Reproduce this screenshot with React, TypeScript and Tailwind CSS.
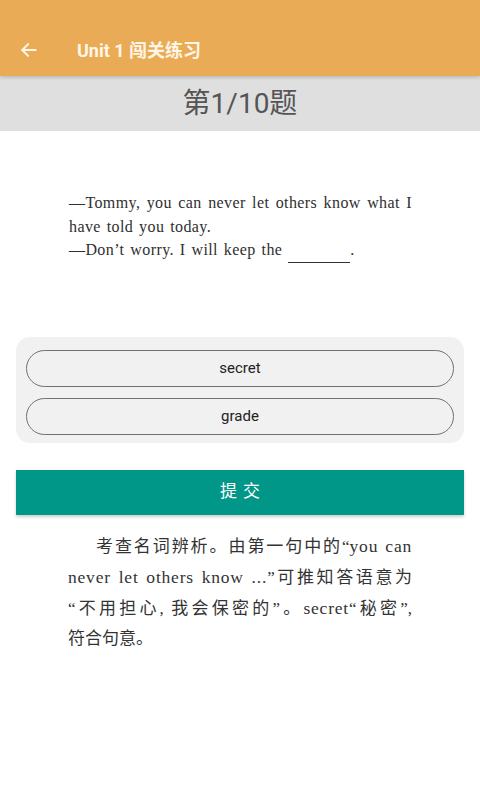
import React from 'react';

const serif = "font-['Liberation_Serif','Noto_Sans_CJK_SC',serif]";

export default function App() {
  const options = ['secret', 'grade'];

  return (
    <div className="w-[480px] h-[800px] bg-white overflow-hidden font-['Roboto','Noto_Sans_CJK_SC',sans-serif]">
      {/* Toolbar */}
      <header className="h-[76px] bg-[#EAAB57] pt-6 flex items-center shadow-[0_2px_3px_rgba(0,0,0,0.15)] relative z-10">
        <button className="w-[58px] flex items-center pl-[19px] text-[#FFF6E6]">
          <svg width="20" height="20" viewBox="0 0 24 24" fill="none" stroke="currentColor" strokeWidth="2.4" strokeLinecap="round" strokeLinejoin="round">
            <path d="M20 12H4" />
            <path d="M11 5l-7 7 7 7" />
          </svg>
        </button>
        <h1 className="ml-[19px] text-[18px] font-bold text-[#FFF6E6]">Unit 1 闯关练习</h1>
      </header>

      {/* Progress */}
      <div className="h-[55px] bg-[#DFDFDF] flex items-center justify-center">
        <span className="text-[28px] text-[#555555]">第1/10题</span>
      </div>

      {/* Question */}
      <div className={`pt-[60px] pl-[69px] text-[16px] leading-[23.5px] tracking-[0.4px] [word-spacing:1.5px] text-[#2f2f2f] ${serif}`}>
        <div className="w-[343px] text-justify [text-align-last:justify]">—Tommy, you can never let others know what I</div>
        <div>have told you today.</div>
        <div>—Don’t worry. I will keep the <span className="inline-block w-[62px] border-b border-[#333]">&nbsp;</span>.</div>
      </div>

      {/* Options */}
      <div className="mt-[74px] mx-4 bg-[#F1F1F1] rounded-[14px] px-[10px] pt-[13px] pb-[8px] flex flex-col gap-[11px]">
        {options.map((o) => (
          <button
            key={o}
            className="h-[37px] w-full rounded-full border-[1.5px] border-[#707070] text-[15px] text-[#222] flex items-center justify-center"
          >
            {o}
          </button>
        ))}
      </div>

      {/* Submit */}
      <button className="mt-[27px] mx-4 w-[448px] h-[45px] bg-[#009688] text-white text-[17px] flex items-center justify-center gap-[6px] shadow-[0_2px_3px_rgba(0,0,0,0.2)]">
        <span>提</span>
        <span>交</span>
      </button>

      {/* Explanation */}
      <div className={`mt-4 pl-[68px] text-[17px] leading-[30px] text-[#333] ${serif}`}>
        <div className="pl-[28px] w-[344px] text-justify [text-align-last:justify]">
          考查名词辨析。由第一句中的“<span className="text-[17.5px] tracking-[0.8px]">you can</span>
        </div>
        <div className="w-[344px] text-justify [text-align-last:justify]">
          <span className="text-[17.5px] tracking-[0.8px]">never let others know ...</span>”可推知答语意为
        </div>
        <div className="w-[344px] text-justify [text-align-last:justify]">
          “不用担心, 我会保密的”。<span className="text-[17.5px] tracking-[0.8px]">secret</span>“秘密”,
        </div>
        <div>符合句意。</div>
      </div>
    </div>
  );
}
